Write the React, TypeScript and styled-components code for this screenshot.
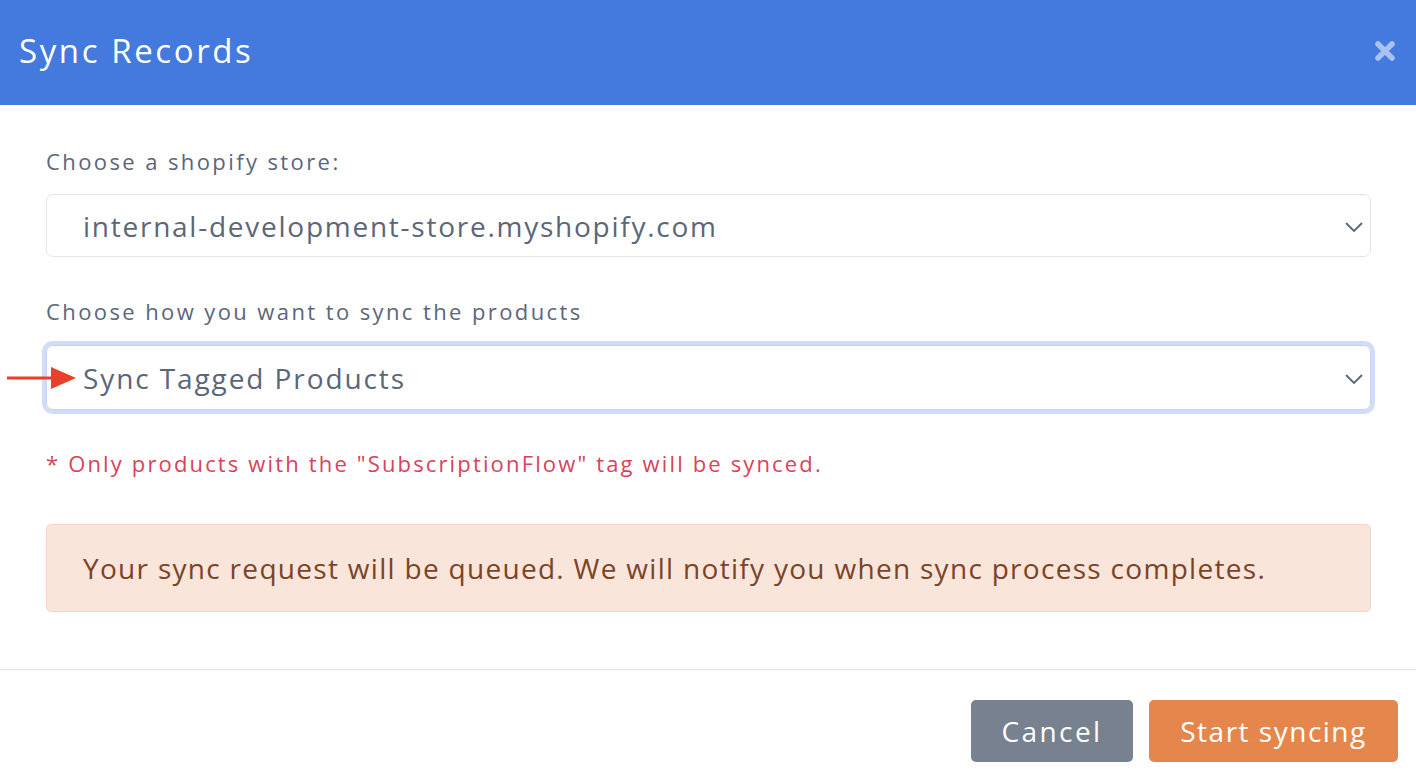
import { createGlobalStyle } from "styled-components";
import styled from "styled-components";

const GlobalStyle = createGlobalStyle`
  html, body {
    margin: 0;
    padding: 0;
    background: #ffffff;
    font-family: "Open Sans", "Liberation Sans", sans-serif;
  }
  * {
    box-sizing: border-box;
  }
`;

const Modal = styled.div`
  width: 1416px;
  height: 782px;
  display: flex;
  flex-direction: column;
  background: #ffffff;
  overflow: hidden;
`;

const Header = styled.div`
  height: 105px;
  background: #4479dd;
  display: flex;
  align-items: center;
  justify-content: space-between;
  padding: 0 20px 0 19px;
`;

const Title = styled.h2`
  margin: 0;
  margin-top: -4px;
  color: #ffffff;
  font-size: 33px;
  font-weight: 400;
  letter-spacing: 2.6px;
`;

const CloseButton = styled.button`
  border: none;
  background: none;
  padding: 0;
  width: 22px;
  height: 22px;
  margin-top: -4px;
  cursor: pointer;
  display: flex;
`;

const Body = styled.div`
  padding: 40px 45px 0 46px;
  height: 565px;
  border-bottom: 1px solid #dde3ef;
  display: flex;
  flex-direction: column;
`;

const Label = styled.label`
  display: block;
  color: #5c6679;
  font-size: 22px;
  letter-spacing: 2.4px;
  line-height: 32px;
  margin-bottom: 17px;
`;

const SelectWrap = styled.div<{ $focused?: boolean }>`
  position: relative;
  height: ${(p) => (p.$focused ? "65px" : "63px")};
  margin-top: ${(p) => (p.$focused ? "1px" : "0")};
  border: 1px solid ${(p) => (p.$focused ? "#c3d2f0" : "#e2e5ea")};
  border-radius: 7px;
  display: flex;
  align-items: center;
  padding-left: 36px;
  color: #5b6679;
  font-size: 28px;
  letter-spacing: ${(p) => (p.$focused ? "1.9px" : "1.75px")};
  box-shadow: ${(p) => (p.$focused ? "0 0 0 4px #d1ddf6" : "none")};
  margin-bottom: ${(p) => (p.$focused ? "37px" : "38px")};
`;

const Chevron = styled.svg`
  position: absolute;
  right: 7px;
  top: 50%;
  width: 18px;
  height: 10px;
  margin-top: -4px;
`;

const Pointer = styled.svg`
  position: absolute;
  left: -40px;
  top: 50%;
  width: 70px;
  height: 24px;
  margin-top: -12px;
`;

const Note = styled.p`
  margin: 0 0 45px;
  color: #d9435a;
  font-size: 22px;
  letter-spacing: 2.15px;
  line-height: 32px;
`;

const Alert = styled.div`
  height: 88px;
  background: #f9e5da;
  border: 1px solid #f5d6c5;
  border-radius: 5px;
  display: flex;
  align-items: center;
  padding-left: 36px;
  color: #7a4426;
  font-size: 28px;
  letter-spacing: 1.3px;
`;

const Footer = styled.div`
  display: flex;
  justify-content: flex-end;
  gap: 16px;
  padding: 30px 18px 0 0;
`;

const Button = styled.button<{ $variant: "muted" | "primary" }>`
  height: 62px;
  border: none;
  border-radius: 5px;
  padding: 0;
  width: ${(p) => (p.$variant === "muted" ? "162px" : "249px")};
  background: ${(p) => (p.$variant === "muted" ? "#77818f" : "#e5874d")};
  color: #ffffff;
  font-family: inherit;
  font-size: 28px;
  letter-spacing: ${(p) => (p.$variant === "muted" ? "2.4px" : "1.5px")};
  cursor: pointer;
`;

const ChevronIcon = () => (
  <Chevron viewBox="0 0 18 10">
    <path d="M1 1l8 8 8-8" fill="none" stroke="#5b6679" strokeWidth="1.8" />
  </Chevron>
);

export default function App() {
  return (
    <>
      <GlobalStyle />
      <Modal>
        <Header>
          <Title>Sync Records</Title>
          <CloseButton aria-label="Close">
            <svg viewBox="0 0 22 22" width="22" height="22">
              <path
                d="M4 4l14 14M18 4L4 18"
                stroke="#a9c2f2"
                strokeWidth="5.5"
                strokeLinecap="round"
              />
            </svg>
          </CloseButton>
        </Header>
        <Body>
          <Label>Choose a shopify store:</Label>
          <SelectWrap>
            internal-development-store.myshopify.com
            <ChevronIcon />
          </SelectWrap>
          <Label>Choose how you want to sync the products</Label>
          <SelectWrap $focused>
            <Pointer viewBox="0 0 70 24">
              <path d="M0 12h48" stroke="#e8412a" strokeWidth="3" />
              <path d="M44 1l25 11-25 11z" fill="#e8412a" />
            </Pointer>
            Sync Tagged Products
            <ChevronIcon />
          </SelectWrap>
          <Note>* Only products with the "SubscriptionFlow" tag will be synced.</Note>
          <Alert>
            Your sync request will be queued. We will notify you when sync process completes.
          </Alert>
        </Body>
        <Footer>
          <Button $variant="muted">Cancel</Button>
          <Button $variant="primary">Start syncing</Button>
        </Footer>
      </Modal>
    </>
  );
}
